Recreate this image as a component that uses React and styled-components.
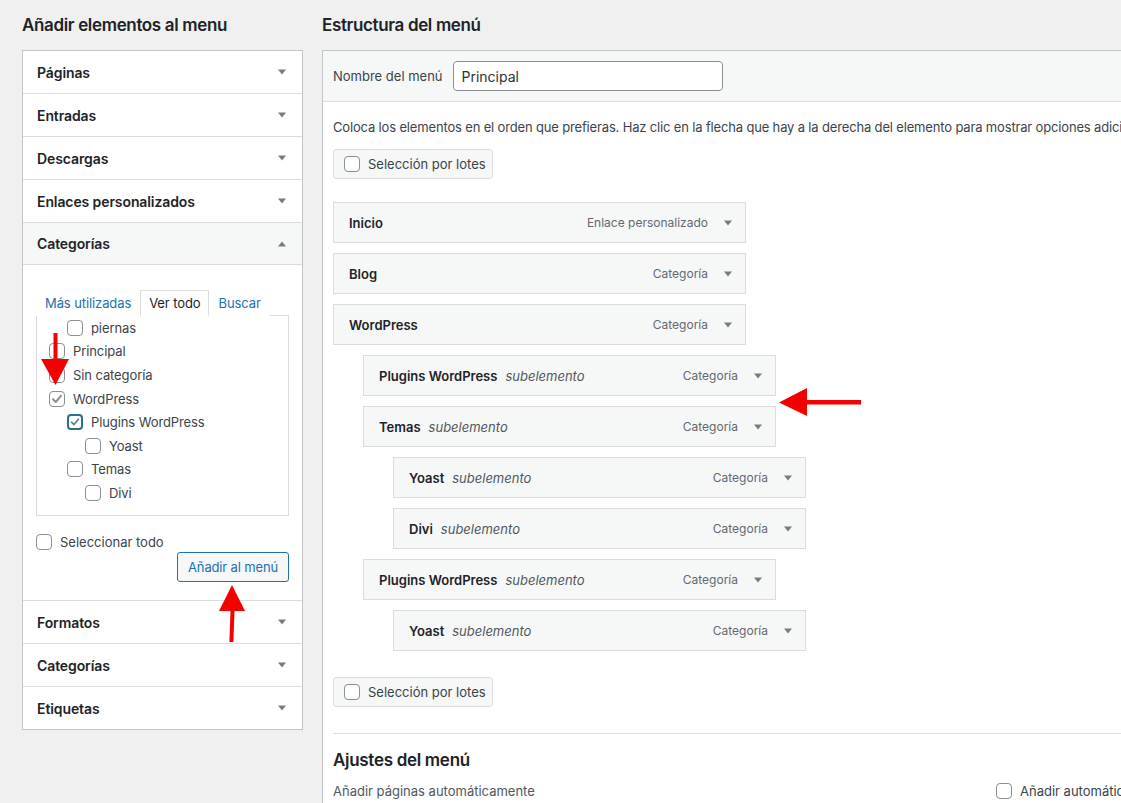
import React from 'react'
import styled, { createGlobalStyle } from 'styled-components'

const GlobalStyle = createGlobalStyle`
  html, body {
    margin: 0;
    padding: 0;
    background: #f0f0f1;
    overflow: hidden;
  }
  body {
    font-family: Inter, "Noto Sans", "Liberation Sans", sans-serif;
    color: #3c434a;
    font-size: 13px;
  }
  * { box-sizing: border-box; }
`

const leftSections = ['Páginas', 'Entradas', 'Descargas', 'Enlaces personalizados']
const bottomSections = ['Formatos', 'Categorías', 'Etiquetas']

const categories = [
  { name: 'piernas', depth: 1 },
  { name: 'Principal', depth: 0 },
  { name: 'Sin categoría', depth: 0 },
  { name: 'WordPress', depth: 0, checked: true },
  { name: 'Plugins WordPress', depth: 1, checked: true, focus: true },
  { name: 'Yoast', depth: 2 },
  { name: 'Temas', depth: 1 },
  { name: 'Divi', depth: 2 },
]

const menuItems = [
  { title: 'Inicio', type: 'Enlace personalizado', depth: 0 },
  { title: 'Blog', type: 'Categoría', depth: 0 },
  { title: 'WordPress', type: 'Categoría', depth: 0 },
  { title: 'Plugins WordPress', type: 'Categoría', depth: 1 },
  { title: 'Temas', type: 'Categoría', depth: 1 },
  { title: 'Yoast', type: 'Categoría', depth: 2 },
  { title: 'Divi', type: 'Categoría', depth: 2 },
  { title: 'Plugins WordPress', type: 'Categoría', depth: 1 },
  { title: 'Yoast', type: 'Categoría', depth: 2 },
]

const Caret = ({ up, color = '#787c82' }) => (
  <svg width="10" height="6" viewBox="0 0 10 6" style={{ display: 'block' }}>
    <path d={up ? 'M1 5.5 L5 0.5 L9 5.5 Z' : 'M1 0.5 L9 0.5 L5 5.5 Z'} fill={color} />
  </svg>
)

const CheckBox = ({ checked, focus }) => (
  <Box $focus={focus}>
    {checked && (
      <svg width="14" height="14" viewBox="0 0 14 14">
        <path d="M3 7.2 L5.8 10 L11 3.8" fill="none" stroke={focus ? '#6d7f8f' : '#8c8f94'} strokeWidth="2" strokeLinecap="round" strokeLinejoin="round" />
      </svg>
    )}
  </Box>
)

const App = () => {
  return (
    <>
      <GlobalStyle />
      <Page>
        <LeftCol>
          <Title>Añadir elementos al menu</Title>
          <Accordion>
            {leftSections.map((s) => (
              <Section key={s}>
                <SectionHead>
                  <span>{s}</span>
                  <Caret />
                </SectionHead>
              </Section>
            ))}
            <Section>
              <SectionHead $open>
                <span>Categorías</span>
                <Caret up />
              </SectionHead>
              <SectionBody>
                <Tabs>
                  <Tab>Más utilizadas</Tab>
                  <Tab $active>Ver todo</Tab>
                  <Tab>Buscar</Tab>
                </Tabs>
                <ListBox>
                  {categories.map((c, i) => (
                    <CatRow key={i} $depth={c.depth}>
                      <CheckBox checked={c.checked} focus={c.focus} />
                      <span>{c.name}</span>
                    </CatRow>
                  ))}
                </ListBox>
                <SelectAll>
                  <CheckBox />
                  <span>Seleccionar todo</span>
                </SelectAll>
                <AddRow>
                  <AddButton>Añadir al menú</AddButton>
                </AddRow>
              </SectionBody>
            </Section>
            {bottomSections.map((s) => (
              <Section key={s}>
                <SectionHead>
                  <span>{s}</span>
                  <Caret />
                </SectionHead>
              </Section>
            ))}
          </Accordion>
        </LeftCol>

        <RightCol>
          <Title>Estructura del menú</Title>
          <Panel>
            <PanelHead>
              <Label>Nombre del menú</Label>
              <NameInput>Principal</NameInput>
            </PanelHead>
            <PanelBody>
              <Desc>
                Coloca los elementos en el orden que prefieras. Haz clic en la flecha que hay a la derecha del elemento para mostrar opciones adicionales.
              </Desc>
              <BulkButton>
                <CheckBox />
                <span>Selección por lotes</span>
              </BulkButton>
              <MenuList>
                {menuItems.map((m, i) => (
                  <MenuItem key={i} $depth={m.depth}>
                    <ItemTitle>
                      <strong>{m.title}</strong>
                      {m.depth > 0 && <em>subelemento</em>}
                    </ItemTitle>
                    <ItemControls>
                      <span>{m.type}</span>
                      <Caret color="#787c82" />
                    </ItemControls>
                  </MenuItem>
                ))}
              </MenuList>
              <BulkButton>
                <CheckBox />
                <span>Selección por lotes</span>
              </BulkButton>
              <Divider />
              <SubTitle>Ajustes del menú</SubTitle>
              <SettingRow>
                <SettingLabel>Añadir páginas automáticamente</SettingLabel>
                <SettingValue>
                  <CheckBox />
                  <span>Añadir automáticamente nuevas páginas de nivel superior a este menú</span>
                </SettingValue>
              </SettingRow>
            </PanelBody>
          </Panel>
        </RightCol>

        <Annotations width="1121" height="803" viewBox="0 0 1121 803">
          <g fill="#f50000" stroke="none">
            <rect x="53.5" y="333" width="4" height="28" />
            <polygon points="41,359 69,359 55.5,385" />
            <rect x="230" y="608" width="4" height="34" transform="rotate(2 232 625)" />
            <polygon points="219,611 245,611 232,585" />
            <rect x="804" y="400" width="57" height="4.5" />
            <polygon points="779,402.5 807,388 807,416" />
          </g>
        </Annotations>
      </Page>
    </>
  )
}

const Page = styled.div`
  position: relative;
  display: flex;
  align-items: flex-start;
  gap: 19px;
  padding-left: 22px;
  width: 1121px;
  height: 803px;
  overflow: hidden;
`

const LeftCol = styled.div`
  width: 281px;
  flex-shrink: 0;
`

const RightCol = styled.div`
  width: 840px;
  flex-shrink: 0;
`

const Title = styled.h2`
  margin: 0;
  padding: 14px 0 14px;
  font-size: 17px;
  line-height: 22px;
  font-weight: 600;
  letter-spacing: -0.35px;
  color: #1d2327;
`

const Accordion = styled.div`
  background: #fff;
  border: 1px solid #c3c4c7;
`

const Section = styled.div`
  border-bottom: 1px solid #dcdcde;
  &:last-child { border-bottom: none; }
`

const SectionHead = styled.div`
  height: 42px;
  display: flex;
  align-items: center;
  justify-content: space-between;
  padding: 0 15px 0 14px;
  font-size: 14px;
  font-weight: 600;
  letter-spacing: -0.1px;
  color: #1d2327;
  background: ${({ $open }) => ($open ? '#f6f7f7' : '#fff')};
  border-bottom: ${({ $open }) => ($open ? '1px solid #dcdcde' : 'none')};
`

const SectionBody = styled.div`
  padding: 25px 13px 18px;
`

const Tabs = styled.div`
  display: flex;
  position: relative;
  z-index: 1;
`

const Tab = styled.div`
  height: 26px;
  padding: 0 8px;
  display: flex;
  align-items: center;
  font-size: 13px;
  letter-spacing: -0.1px;
  color: ${({ $active }) => ($active ? '#1d2327' : '#2271b1')};
  border: 1px solid ${({ $active }) => ($active ? '#dcdcde' : 'transparent')};
  border-bottom-color: ${({ $active }) => ($active ? '#fff' : 'transparent')};
  background: #fff;
  margin-bottom: -1px;
`

const ListBox = styled.div`
  height: 201px;
  border: 1px solid #dcdcde;
  padding: 0 0 0 12px;
  overflow: hidden;
`

const CatRow = styled.div`
  display: flex;
  align-items: center;
  gap: 8px;
  height: 23.6px;
  padding-left: ${({ $depth }) => $depth * 18}px;
  font-size: 13px;
  letter-spacing: -0.1px;
  color: #3c434a;
`

const Box = styled.span`
  width: 16px;
  height: 16px;
  flex-shrink: 0;
  display: inline-flex;
  align-items: center;
  justify-content: center;
  border-radius: 4px;
  background: #fff;
  border: ${({ $focus }) => ($focus ? '2px solid #2c6e8e' : '1px solid #8c8f94')};
`

const SelectAll = styled.div`
  display: flex;
  align-items: center;
  gap: 8px;
  margin-top: 18px;
  height: 16px;
  font-size: 13px;
  color: #3c434a;
`

const AddRow = styled.div`
  display: flex;
  justify-content: flex-end;
  margin-top: 2px;
`

const AddButton = styled.button`
  height: 30px;
  padding: 0 10px;
  font-family: inherit;
  font-size: 13px;
  letter-spacing: -0.15px;
  color: #2271b1;
  background: #f6f7f7;
  border: 1px solid #2271b1;
  border-radius: 3px;
`

const Panel = styled.div`
  background: #fff;
  border: 1px solid #c3c4c7;
  border-right: none;
  height: 800px;
`

const PanelHead = styled.div`
  height: 51px;
  display: flex;
  align-items: center;
  padding: 0 10px;
  background: #f6f7f7;
  border-bottom: 1px solid #dcdcde;
`

const Label = styled.span`
  font-size: 13px;
  color: #3c434a;
  margin-right: 10px;
`

const NameInput = styled.div`
  width: 270px;
  height: 30px;
  display: flex;
  align-items: center;
  padding: 0 8px;
  font-size: 14px;
  color: #2c3338;
  background: #fff;
  border: 1px solid #8c8f94;
  border-radius: 4px;
`

const PanelBody = styled.div`
  padding: 0 10px;
`

const Desc = styled.p`
  margin: 16px 0 0;
  font-size: 13px;
  line-height: 19px;
  letter-spacing: -0.16px;
  white-space: nowrap;
  color: #3c434a;
`

const BulkButton = styled.div`
  margin-top: 12px;
  width: 160px;
  height: 30px;
  display: flex;
  align-items: center;
  gap: 8px;
  padding: 0 10px;
  font-size: 13px;
  white-space: nowrap;
  color: #3c434a;
  background: #f6f7f7;
  border: 1px solid #dcdcde;
  border-radius: 3px;
`

const MenuList = styled.div`
  margin-top: 23px;
  margin-bottom: 26px;
  display: flex;
  flex-direction: column;
  gap: 10px;
`

const MenuItem = styled.div`
  width: 413px;
  height: 41px;
  margin-left: ${({ $depth }) => $depth * 30}px;
  display: flex;
  align-items: center;
  justify-content: space-between;
  padding: 0 12px 0 15px;
  background: #f6f7f7;
  border: 1px solid #dcdcde;
`

const ItemTitle = styled.div`
  display: flex;
  align-items: center;
  gap: 8px;
  font-size: 13px;
  strong {
    font-weight: 600;
    color: #1d2327;
  }
  em {
    font-style: italic;
    color: #50575e;
  }
`

const ItemControls = styled.div`
  display: flex;
  align-items: center;
  gap: 15px;
  font-size: 12px;
  color: #646970;
`

const Divider = styled.div`
  margin-top: 26px;
  height: 1px;
  background: #dcdcde;
  margin-right: -10px;
`

const SubTitle = styled.h3`
  margin: 0;
  padding: 15px 0 9px;
  font-size: 17px;
  line-height: 22px;
  font-weight: 600;
  letter-spacing: -0.3px;
  color: #1d2327;
`

const SettingRow = styled.div`
  display: flex;
  align-items: center;
  height: 22px;
  font-size: 13px;
  color: #50575e;
`

const SettingLabel = styled.span`
  width: 663px;
  flex-shrink: 0;
`

const SettingValue = styled.span`
  display: flex;
  align-items: center;
  gap: 8px;
  white-space: nowrap;
  color: #3c434a;
`

const Annotations = styled.svg`
  position: absolute;
  top: 0;
  left: 0;
  pointer-events: none;
`

export default App
